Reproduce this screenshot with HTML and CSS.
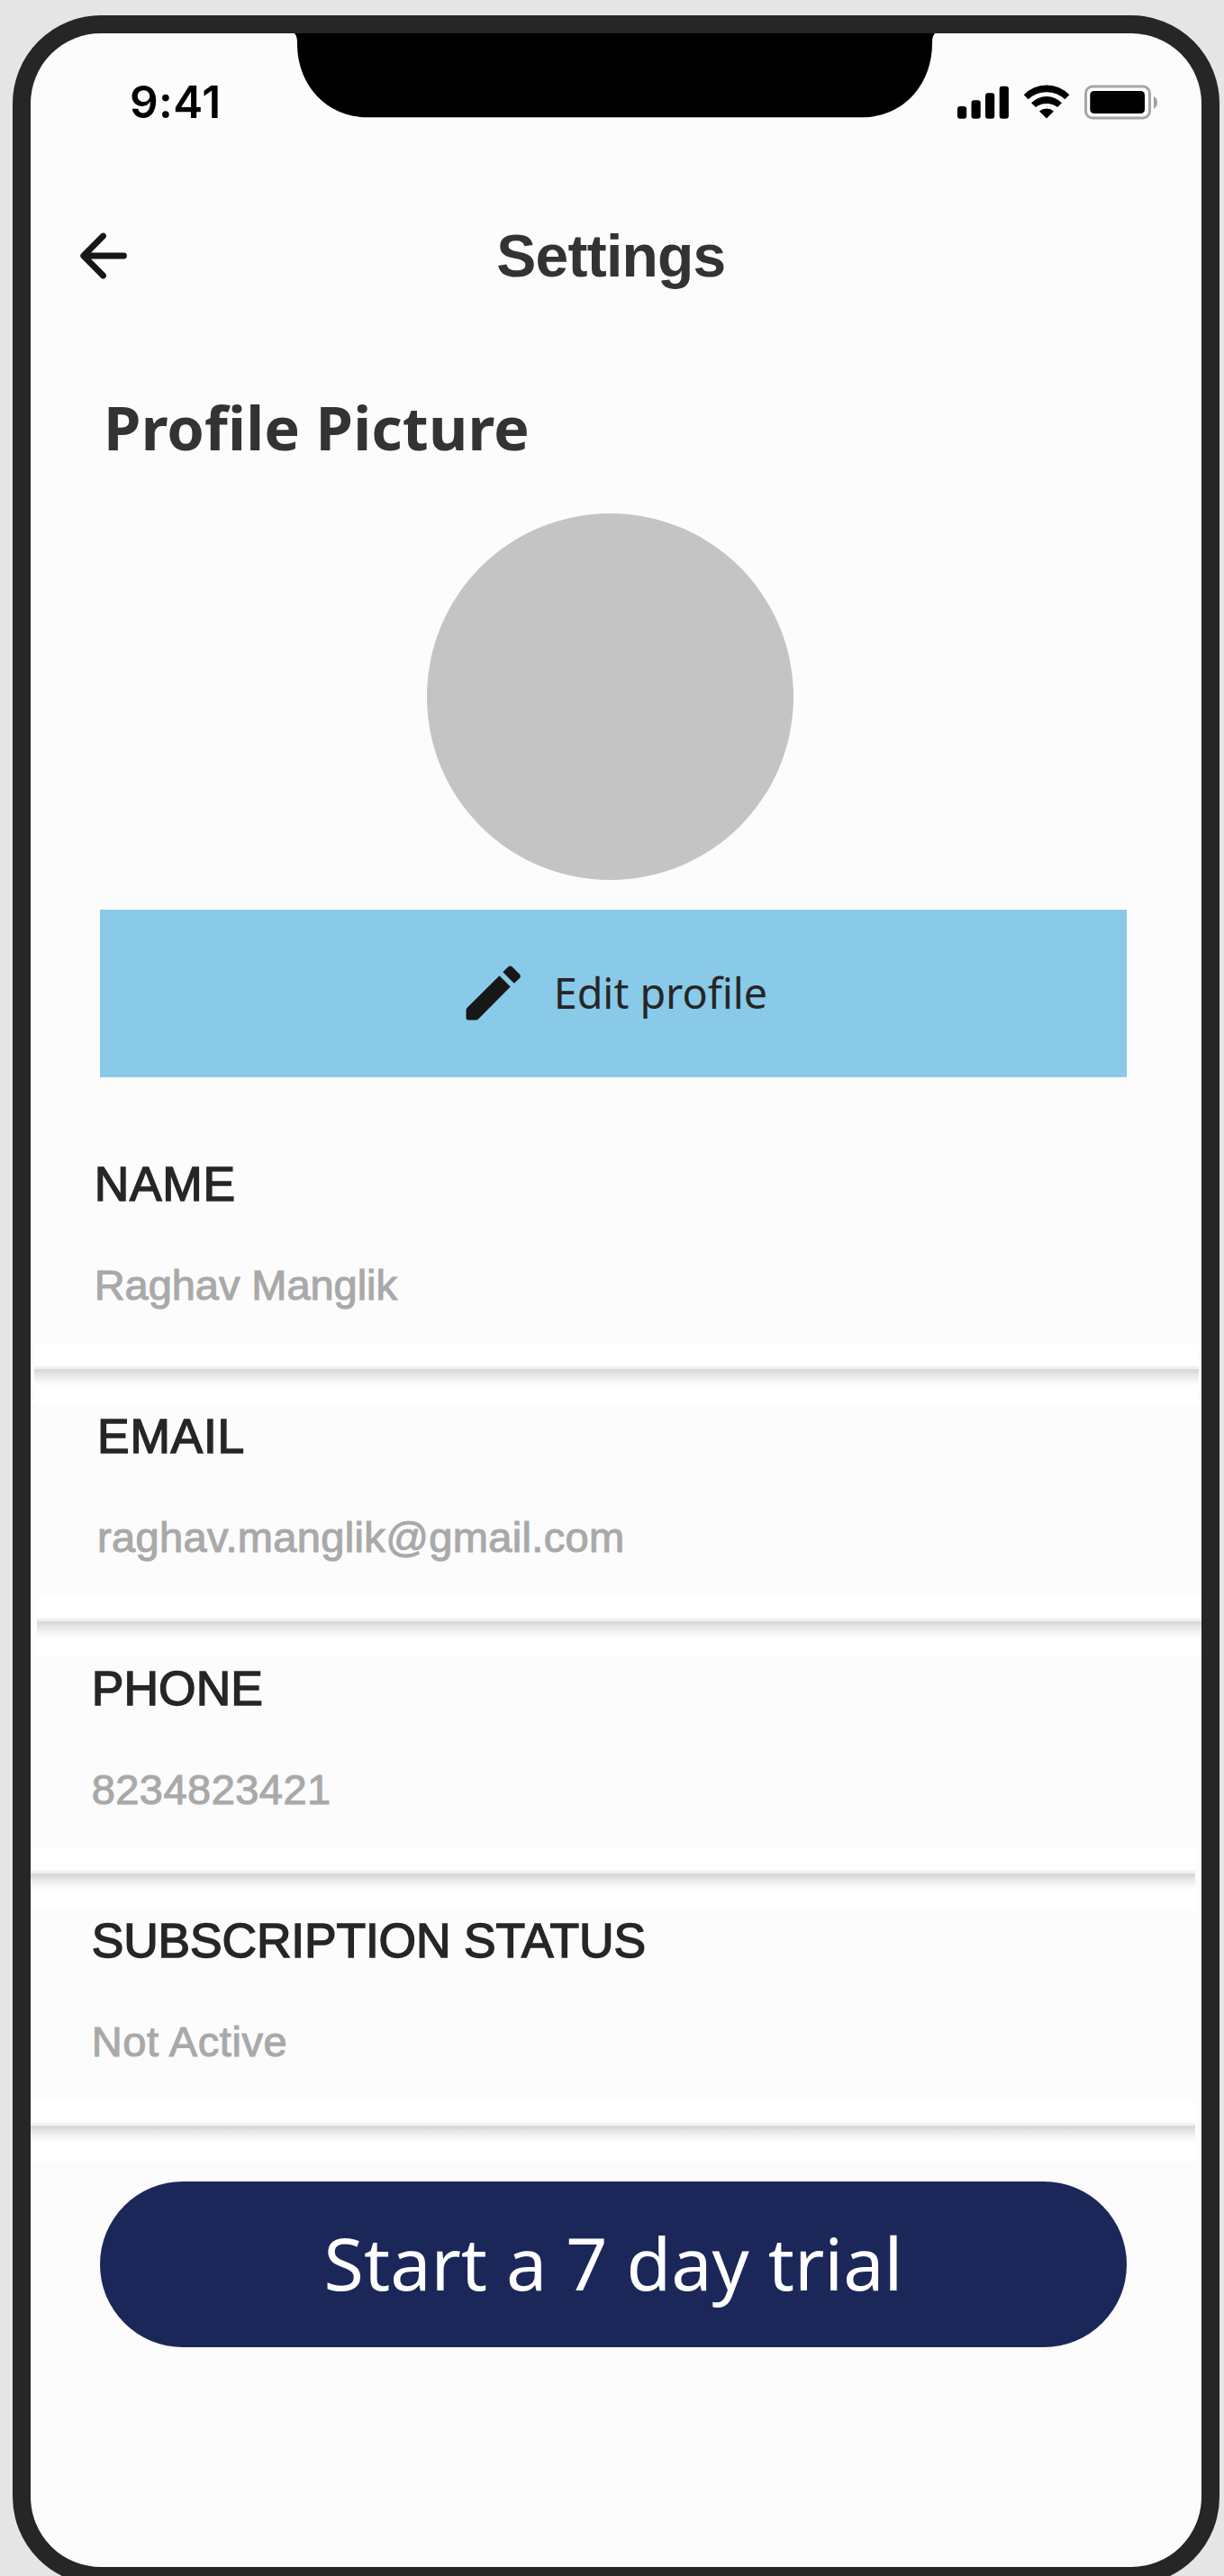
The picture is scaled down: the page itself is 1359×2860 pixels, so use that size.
FILE: index.html
```html
<!DOCTYPE html>
<html lang="en">
<head>
<meta charset="utf-8">
<title>Settings</title>
<link rel="stylesheet" href="styles.css">
</head>
<body>
<main class="phone">
  <svg class="notch" viewBox="0 0 712 94" aria-hidden="true"><path d="M0 0C2.500 3 3 6 3 11C3 57 35 93.300 82 93.300H629C676 93.300 708 57 708 11C708 6 708.500 3 711 0Z"/></svg>
  <div class="status">
    <span class="time">9:41</span>
    <svg class="indicators" viewBox="1062 93 225 41" aria-hidden="true">
      <rect x="1063" y="118" width="10.200" height="13.700" rx="3"/>
      <rect x="1078.500" y="111.300" width="10.200" height="20.400" rx="3"/>
      <rect x="1094" y="103.300" width="10.200" height="28.400" rx="3"/>
      <rect x="1109.700" y="95.700" width="10.200" height="36" rx="3"/>
      <path d="M1136.700 105.300A35 35 0 0 1 1187.300 105.300L1182.300 110.300A29.500 29.500 0 0 0 1141.700 110.300Z"/>
      <path d="M1145 114.300A23.400 23.400 0 0 1 1179 114.300L1174 119A20 20 0 0 0 1150 119Z"/>
      <path d="M1154 123.500A12 12 0 0 1 1170 123.500L1162 131.400Z"/>
      <rect class="battery" x="1205.500" y="96" width="71" height="35" rx="7.500"/>
      <rect x="1210.300" y="101" width="60.700" height="25" rx="4.500"/>
      <path class="battery-tip" d="M1281 107C1286.300 109 1286.300 118.500 1281 120.500Z"/>
    </svg>
  </div>
  <header class="header">
    <svg class="back" viewBox="0 0 54 54" aria-hidden="true"><path d="M49.500 27H6M26.500 5L4.700 27L26.500 49"/></svg>
    <h1 class="title">Settings</h1>
  </header>
  <h2 class="section-title">Profile Picture</h2>
  <div class="avatar"></div>
  <button class="edit">
    <svg class="pencil" viewBox="0 0 62 62" aria-hidden="true"><path d="M37.500 11.200L49.700 23.500L14.500 59Q13.200 60.500 11.500 60.500H3Q.500 60.500 .500 58V50Q.500 48 2 46.600ZM41.300 7.300L47.200 1.600Q49.500 -.500 51.800 1.600L59.800 9.600Q62 12 59.800 14.200L53.800 19.800Z"/></svg>
    <span class="edit-label">Edit profile</span>
  </button>
  <section class="fields">
    <div class="field field-name"><span class="label">NAME</span><span class="value">Raghav Manglik</span><i class="divider"></i></div>
    <div class="field field-email"><span class="label">EMAIL</span><span class="value">raghav.manglik@gmail.com</span><i class="divider"></i></div>
    <div class="field field-phone"><span class="label">PHONE</span><span class="value">8234823421</span><i class="divider"></i></div>
    <div class="field field-status"><span class="label">SUBSCRIPTION STATUS</span><span class="value">Not Active</span><i class="divider"></i></div>
  </section>
  <button class="trial"><span class="trial-label">Start a 7 day trial</span></button>
</main>
</body>
</html>
```
FILE: styles.css
```css
* { box-sizing: border-box; }
html { height: 2860px; overflow: hidden; }
body { margin: 0; height: 2860px; overflow: hidden; background: #e5e5e5; font-family: "Liberation Sans", Arial, sans-serif; }
.phone { position: relative; display: flex; flex-direction: column; width: 1340px; height: 2852.500px; margin: 17px 0 0 14.400px; border: 20px solid #262626; border-radius: 98px; background: #fcfcfc; }
.notch { position: absolute; left: 292.500px; top: 0; width: 712px; height: 94px; }
.status { display: flex; justify-content: space-between; align-items: flex-start; height: 166px; padding: 42.500px 47.500px 0 109.500px; }
.time { font: 600 49.500px/66px Inter, sans-serif; letter-spacing: .500px; color: #000; }
.indicators { width: 225px; height: 41px; margin-top: 13.500px; }
.battery { fill: none; stroke: #a6a6a6; stroke-width: 3; }
.battery-tip { fill: #a0a0a0; }
.header { display: grid; grid-template-columns: 54px 1fr 54px; align-items: center; height: 161px; padding: 0 54px; }
.back { width: 54px; height: 54px; fill: none; stroke: #171717; stroke-width: 6.800px; stroke-linecap: round; stroke-linejoin: round; }
.title { margin: 0; padding-right: 12px; text-align: center; font-size: 66px; line-height: 80px; font-weight: 700; letter-spacing: -.750px; color: #333; }
.section-title { margin: 61px 0 0 80.700px; font: 700 66.700px/100px "Noto Sans", sans-serif; letter-spacing: .150px; white-space: nowrap; color: #333; }
.avatar { flex: none; width: 407px; height: 407px; margin: 45px auto 0 439.500px; border-radius: 50%; background: #c4c4c4; }
.edit, .trial { flex: none; display: flex; align-items: center; border: 0; padding: 0; width: 1140px; margin-left: 76.600px; white-space: nowrap; }
.edit { height: 186.300px; margin-top: 33px; padding-left: 405.700px; gap: 36px; background: #88cae8; }
.pencil { width: 62px; height: 62px; fill: #171717; }
.edit-label { padding-bottom: 2px; font: 400 46.700px/64px "Noto Sans", sans-serif; color: #262626; }
.fields { display: flex; flex-direction: column; margin-top: 83.700px; }
.field { display: flex; flex-direction: column; height: 280px; white-space: nowrap; padding-left: var(--inset); }
.field-name { --inset: 70.300px; --start: 3.500px; --end: 3.500px; --label-track: .700px; --value-track: -.060px; }
.field-email { --inset: 73.700px; --start: 6.500px; --end: 0px; --label-track: .700px; --value-track: .350px; }
.field-phone, .field-status { --inset: 67.300px; --start: 0px; --end: 7px; }
.field-phone { --label-track: .100px; --value-track: .450px; }
.field-status { --label-track: -.150px; --value-track: .600px; }
.label { font-size: 53.400px; line-height: 69px; letter-spacing: var(--label-track); color: #262626; -webkit-text-stroke: 1.500px #262626; }
.value { margin-top: 50.300px; font-size: 47px; line-height: 56px; letter-spacing: var(--value-track); color: #a9a9a9; -webkit-text-stroke: 1.100px #a9a9a9; }
.divider { height: 67px; margin: auto var(--end) 0 calc(var(--start) - var(--inset)); background: linear-gradient(#fff 23px, #f4f4f4 24px, #f0f0f0 26.500px, #dadada 27.500px, #dadada 30px, #e4e4e4 32px, #ececec 36px, #f5f5f5 40px, #fcfcfc 44px, #fff 47px); }
.trial { height: 183.500px; margin-top: 22.500px; justify-content: center; border-radius: 92px; background: #1c2759; }
.trial-label { padding-bottom: 5px; font: 400 80.800px/110px "Noto Sans", sans-serif; color: #fff; }
```
